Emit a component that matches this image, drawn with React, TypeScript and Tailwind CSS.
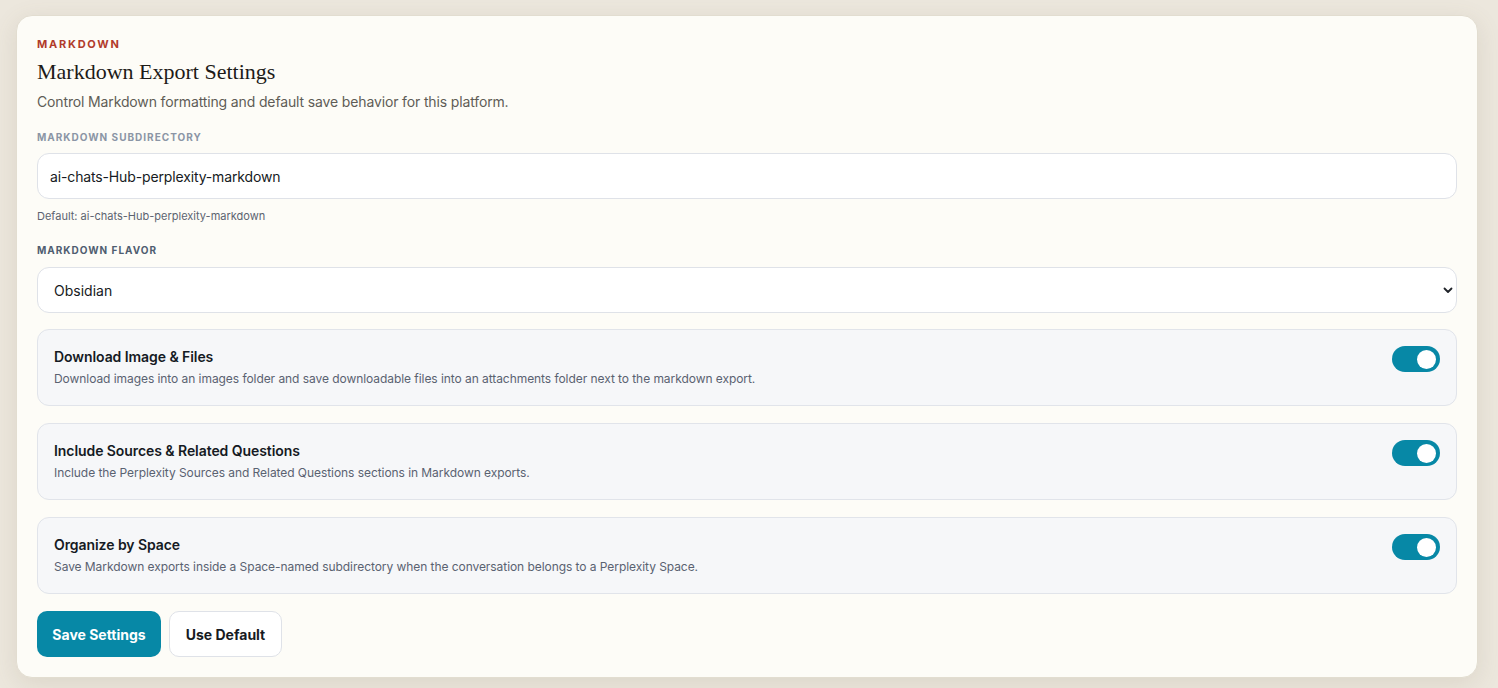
import { useState } from 'react'

const SANS = "font-['Inter',_'Noto_Sans',_sans-serif]"

type ToggleRowProps = {
  title: string
  description: string
  enabled: boolean
  onToggle: () => void
}

function Toggle({ enabled, onToggle }: { enabled: boolean; onToggle: () => void }) {
  return (
    <button
      type="button"
      onClick={onToggle}
      className={`relative flex h-[26px] w-[48px] shrink-0 items-center rounded-full px-[4px] ${
        enabled ? 'justify-end bg-[#0788a6]' : 'justify-start bg-[#cbd2dc]'
      }`}
    >
      <span className="block h-[19px] w-[19px] rounded-full bg-white" />
    </button>
  )
}

function ToggleRow({ title, description, enabled, onToggle }: ToggleRowProps) {
  return (
    <div className="flex h-[77px] items-start justify-between rounded-[12px] border border-[#e1e4ea] bg-[#f6f7f9] px-[16px] pt-[16px]">
      <div className="mt-[1px] flex flex-col">
        <div className="text-[14px] font-semibold leading-[20px] tracking-[-0.005em] text-[#151a23]">{title}</div>
        <div className="mt-[4px] text-[12px] leading-[16px] tracking-[-0.005em] text-[#5a6271]">{description}</div>
      </div>
      <Toggle enabled={enabled} onToggle={onToggle} />
    </div>
  )
}

export default function App() {
  const [subdir, setSubdir] = useState('ai-chats-Hub-perplexity-markdown')
  const [toggles, setToggles] = useState({ download: true, sources: true, space: true })

  return (
    <div className={`min-h-screen bg-[#ece7dd] pl-[16px] pr-[20px] pt-[15px] pb-[10px] ${SANS}`}>
      <div className="rounded-[16px] border border-[#e2ddd0] bg-[#fdfcf7] px-[20px] pt-[20px] pb-[20px] shadow-[0_6px_24px_rgba(120,105,80,0.14)]">
        <div className="text-[11px] font-bold uppercase leading-[16px] tracking-[0.16em] text-[#b13b2b]">
          Markdown
        </div>
        <h2 className="mt-[6px] font-['Liberation_Serif',_serif] text-[22px] leading-[28px] text-[#1d1b18]">
          Markdown Export Settings
        </h2>
        <p className="mt-[6px] text-[14px] leading-[20px] tracking-[-0.01em] text-[#5f5c56]">
          Control Markdown formatting and default save behavior for this platform.
        </p>

        <label className="mt-[18px] block text-[10px] font-bold uppercase leading-[14px] tracking-[0.1em] text-[#8b95a5]">
          Markdown Subdirectory
        </label>
        <input
          value={subdir}
          onChange={(e) => setSubdir(e.target.value)}
          className="mt-[9px] block h-[46px] w-full rounded-[12px] border border-[#dfe2e8] bg-white px-[12px] text-[14px] tracking-[-0.01em] text-[#161a22] outline-none"
        />
        <div className="mt-[9px] text-[11px] leading-[16px] text-[#5c6370]">
          Default: ai-chats-Hub-perplexity-markdown
        </div>

        <label className="mt-[19px] block text-[10px] font-bold uppercase leading-[14px] tracking-[0.1em] text-[#4f5d70]">
          Markdown Flavor
        </label>
        <div className="mt-[10px] flex h-[46px] w-full items-center justify-between rounded-[12px] border border-[#dfe2e8] bg-white pl-[16px] pr-[3px] text-[14px] text-[#161a22]">
          <span>Obsidian</span>
          <svg width="10" height="7" viewBox="0 0 10 7" fill="none">
            <path d="M1.5 1.5 5 5l3.5-3.5" stroke="#1f2329" strokeWidth="1.8" strokeLinecap="round" strokeLinejoin="round" />
          </svg>
        </div>

        <div className="mt-[16px] flex flex-col gap-[17px]">
          <ToggleRow
            title="Download Image & Files"
            description="Download images into an images folder and save downloadable files into an attachments folder next to the markdown export."
            enabled={toggles.download}
            onToggle={() => setToggles({ ...toggles, download: !toggles.download })}
          />
          <ToggleRow
            title="Include Sources & Related Questions"
            description="Include the Perplexity Sources and Related Questions sections in Markdown exports."
            enabled={toggles.sources}
            onToggle={() => setToggles({ ...toggles, sources: !toggles.sources })}
          />
          <ToggleRow
            title="Organize by Space"
            description="Save Markdown exports inside a Space-named subdirectory when the conversation belongs to a Perplexity Space."
            enabled={toggles.space}
            onToggle={() => setToggles({ ...toggles, space: !toggles.space })}
          />
        </div>

        <div className="mt-[17px] flex gap-[8px]">
          <button className="h-[46px] w-[124px] rounded-[10px] bg-[#0788a6] text-[14px] font-bold text-white">
            Save Settings
          </button>
          <button className="h-[46px] w-[113px] rounded-[10px] border border-[#dfe2e8] bg-white text-[14px] font-bold text-[#161a22]">
            Use Default
          </button>
        </div>
      </div>
    </div>
  )
}
